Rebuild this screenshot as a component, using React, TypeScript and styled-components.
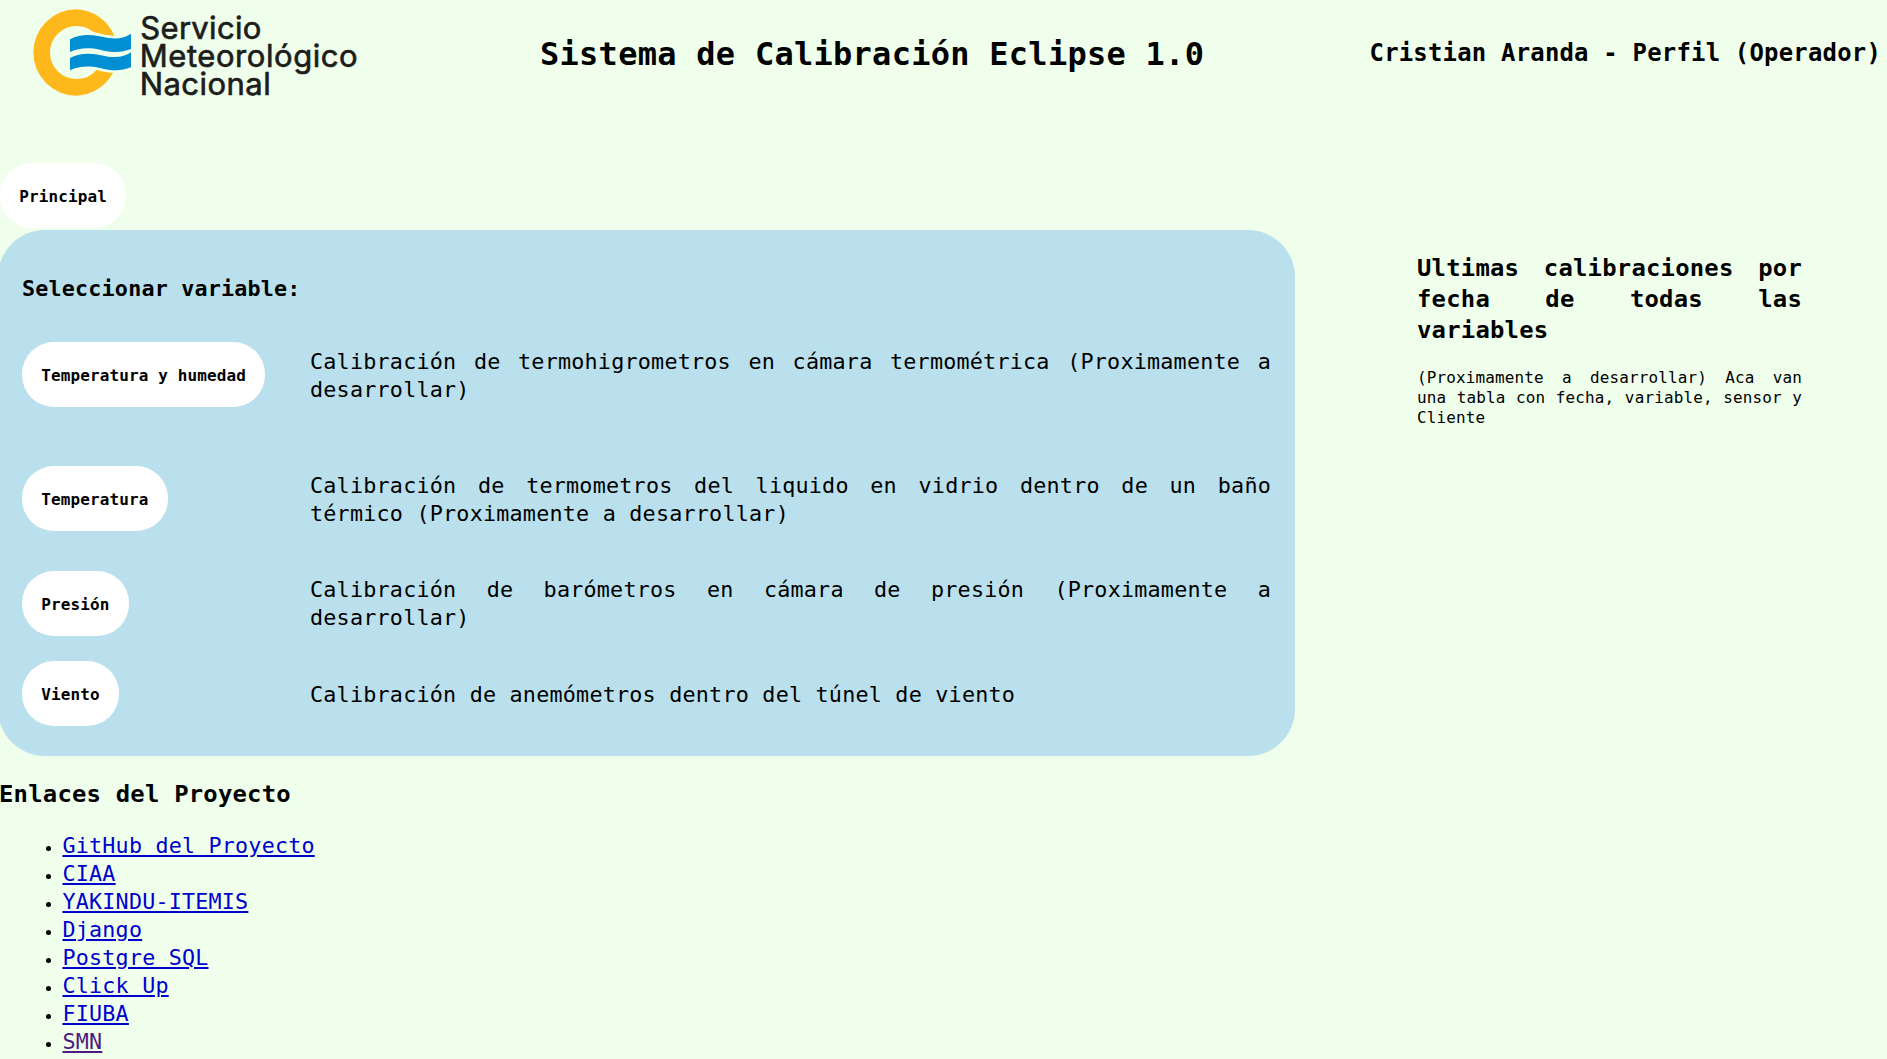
import React from "react";
import styled, { createGlobalStyle, css } from "styled-components";

const MONO = '"DejaVu Sans Mono", "Liberation Mono", monospace';

/* Sets monospaced text whose characters advance by exactly `advance` px. */
const mono = (advance: number) => {
  const size = advance * 1.635;
  return css`
    font-family: ${MONO};
    font-size: ${size.toFixed(2)}px;
    letter-spacing: ${(advance - size * 0.602).toFixed(3)}px;
  `;
};

const GlobalStyle = createGlobalStyle`
  html, body { margin: 0; padding: 0; background: #efffeb; }
  body { height: 1059px; overflow: hidden; color: #000; }
`;

const Page = styled.div`
  display: flex;
  flex-direction: column;
  width: 1887px;
  height: 1059px;
  overflow: hidden;
  background: #efffeb;
`;

const Header = styled.header`
  display: flex;
  align-items: flex-start;
  height: 163px;
`;

const Logo = styled.svg`
  flex: none;
  width: 400px;
  height: 120px;
`;

const LogoText = styled.text`
  font-family: Inter, "Liberation Sans", sans-serif;
  font-size: 93px;
  font-weight: 400;
  fill: #1d1d1b;
  stroke: #1d1d1b;
  stroke-width: 2px;
`;

const Title = styled.h1`
  ${mono(19.54)}
  flex: none;
  margin: 34px 0 0 140px;
  line-height: 40px;
  font-weight: 700;
  white-space: nowrap;
`;

const Profile = styled.h2`
  ${mono(14.62)}
  margin: 38px 6px 0 auto;
  line-height: 31px;
  font-weight: 700;
  white-space: nowrap;
`;

const Pill = styled.button`
  ${mono(9.76)}
  justify-self: start;
  display: block;
  height: 65px;
  margin: 0;
  padding: 2px 19.2px 0;
  border: 0;
  border-radius: 32px;
  background: #fff;
  color: #000;
  font-weight: 700;
  white-space: nowrap;
`;

const Nav = styled.nav`
  display: flex;
  height: 67px;
`;

const Columns = styled.div`
  display: flex;
  align-items: flex-start;
`;

const Panel = styled.section`
  box-sizing: border-box;
  flex: none;
  width: 1297px;
  height: 526px;
  margin-left: -2px;
  padding: 45px 24px 0;
  border-radius: 47px;
  background: #bbe0ed;
`;

const PanelTitle = styled.h3`
  ${mono(13.27)}
  margin: 0 0 39px;
  line-height: 28px;
  font-weight: 700;
`;

const Row = styled.div<{ $height: number }>`
  display: grid;
  grid-template-columns: 288px 961px;
  align-items: start;
  height: ${(p) => p.$height}px;
`;

const Description = styled.p<{ $top: number }>`
  ${mono(13.3)}
  margin: 0;
  padding-top: ${(p) => p.$top}px;
  line-height: 28px;
  text-align: justify;
`;

const Aside = styled.aside`
  width: 385px;
  margin: 23px 0 0 122px;
  text-align: justify;
`;

const AsideTitle = styled.h2`
  ${mono(14.6)}
  margin: 0 0 22px;
  line-height: 31px;
  font-weight: 700;
`;

const AsideText = styled.p`
  ${mono(9.76)}
  margin: 0;
  line-height: 20px;
`;

const LinksTitle = styled.h2`
  ${mono(14.6)}
  margin: 23px 0 0 -1px;
  line-height: 31px;
  font-weight: 700;
`;

const LinkList = styled.ul`
  ${mono(13.28)}
  margin: 22px 0 0;
  padding: 0;
  list-style: none;
`;

const LinkItem = styled.li`
  display: flex;
  align-items: center;
  height: 28px;
  line-height: 28px;
  padding-left: 46px;

  &::before {
    content: "";
    flex: none;
    width: 5px;
    height: 5px;
    margin: 4px 11.5px 0 0;
    border-radius: 50%;
    background: #000;
  }
`;

const Anchor = styled.a<{ $visited?: boolean }>`
  color: ${(p) => (p.$visited ? "#4c1a80" : "#0000cc")};
  text-decoration: underline;
  text-decoration-thickness: 2px;
  text-underline-offset: 2px;
  text-decoration-skip-ink: auto;
`;

const variables = [
  { name: "Temperatura y humedad", text: "Calibración de termohigrometros en cámara termométrica (Proximamente a desarrollar)", height: 124, top: 6 },
  { name: "Temperatura", text: "Calibración de termometros del liquido en vidrio dentro de un baño térmico (Proximamente a desarrollar)", height: 105, top: 6 },
  { name: "Presión", text: "Calibración de barómetros en cámara de presión (Proximamente a desarrollar)", height: 90, top: 5 },
  { name: "Viento", text: "Calibración de anemómetros dentro del túnel de viento", height: 65, top: 20 },
];

const links = ["GitHub del Proyecto", "CIAA", "YAKINDU-ITEMIS", "Django", "Postgre SQL", "Click Up", "FIUBA", "SMN"];

export default function App() {
  return (
    <Page>
      <GlobalStyle />
      <Header>
        <Logo viewBox="0 0 1200 360">
          <path
            fill="#ffb81c"
            d="M343 107A129.500 129.500 0 0 0 229.500 28A129.500 129.500 0 0 0 229.500 287A129.500 129.500 0 0 0 339 218Q310 217 290 209A79.500 79.500 0 0 1 229.500 237A79.500 79.500 0 0 1 229.500 78A79.500 79.500 0 0 1 281 96Q312 106 343 107Z"
          />
          <path
            fill="#008fd3"
            d="M210 118C250 96 290 107 325 114C355 118 376 113 393 101V147C360 160 333 157 300 149C265 142 237 143 210 156Z"
          />
          <path
            fill="#008fd3"
            d="M210 174C250 152 290 163 325 170C355 174 376 169 393 157V202C360 215 333 212 300 204C265 197 237 198 210 211Z"
          />
          <LogoText x="421" y="116" textLength="363">Servicio</LogoText>
          <LogoText x="419" y="201" textLength="654">Meteorológico</LogoText>
          <LogoText x="419" y="285" textLength="393">Nacional</LogoText>
        </Logo>
        <Title>Sistema de Calibración Eclipse 1.0</Title>
        <Profile>Cristian Aranda - Perfil (Operador)</Profile>
      </Header>
      <Nav>
        <Pill>Principal</Pill>
      </Nav>
      <Columns>
        <Panel>
          <PanelTitle>Seleccionar variable:</PanelTitle>
          {variables.map((v) => (
            <Row key={v.name} $height={v.height}>
              <Pill>{v.name}</Pill>
              <Description $top={v.top}>{v.text}</Description>
            </Row>
          ))}
        </Panel>
        <Aside>
          <AsideTitle>Ultimas calibraciones por fecha de todas las variables</AsideTitle>
          <AsideText>
            (Proximamente a desarrollar) Aca van una tabla con fecha, variable, sensor y Cliente
          </AsideText>
        </Aside>
      </Columns>
      <LinksTitle>Enlaces del Proyecto</LinksTitle>
      <LinkList>
        {links.map((name) => (
          <LinkItem key={name}>
            <Anchor href="#" $visited={name === "SMN"}>{name}</Anchor>
          </LinkItem>
        ))}
      </LinkList>
    </Page>
  );
}
